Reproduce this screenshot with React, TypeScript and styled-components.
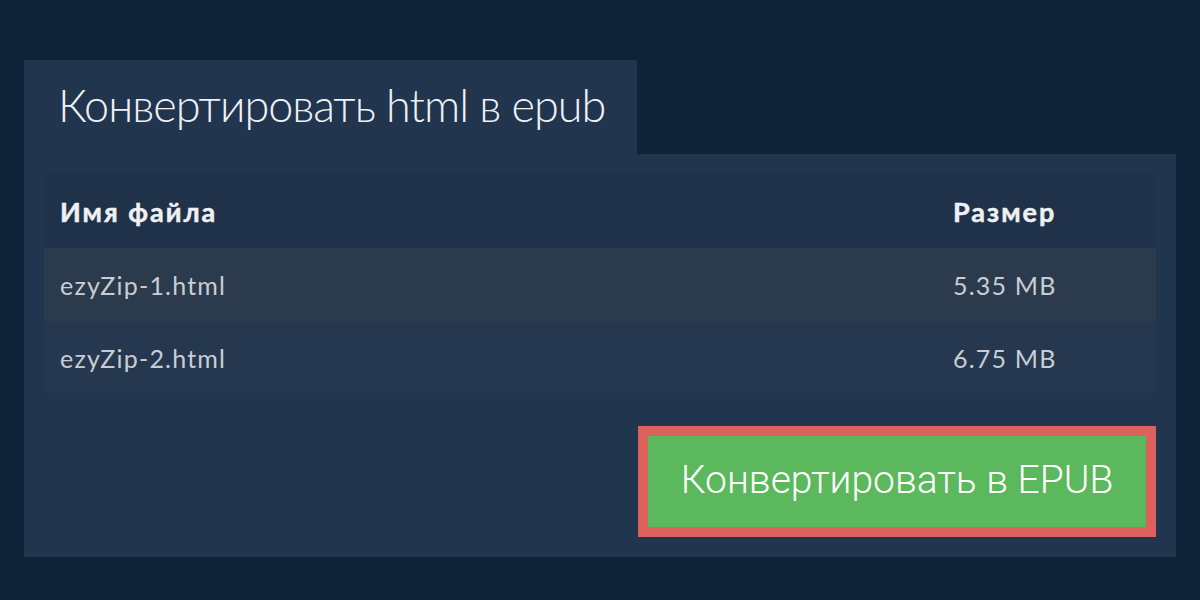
import React from "react";
import styled, { createGlobalStyle } from "styled-components";

const GlobalStyle = createGlobalStyle`
  html, body { margin: 0; padding: 0; }
  body {
    background: #0f2238;
    font-family: Lato, "Noto Sans", sans-serif;
    width: 1200px;
    height: 600px;
    overflow: hidden;
  }
`;

const Page = styled.div`
  padding: 60px 24px 0 24px;
  display: flex;
  flex-direction: column;
  align-items: flex-start;
`;

const Tab = styled.div`
  background: #21354e;
  width: 613px;
  height: 94px;
  box-sizing: border-box;
  padding: 0 0 0 34px;
  display: flex;
  align-items: center;
`;

const Title = styled.h1`
  margin: 0 0 4px 0;
  font-family: Lato, sans-serif;
  font-weight: 300;
  font-size: 45px;
  color: #eef1f4;
  letter-spacing: -1px;
  white-space: nowrap;
`;

const Panel = styled.div`
  background: #21354e;
  align-self: stretch;
  box-sizing: border-box;
  padding: 20px 20px 20px 20px;
  display: flex;
  flex-direction: column;
  gap: 33px;
`;

const Table = styled.div`
  display: grid;
  grid-template-columns: 1fr 219px;
`;

const Row = styled.div<{ $bg: string; $h: number }>`
  display: contents;
  & > div {
    background: ${(p) => p.$bg};
    height: ${(p) => p.$h}px;
  }
`;

const Cell = styled.div<{ $head?: boolean }>`
  display: flex;
  align-items: center;
  padding: 0 16px;
  font-family: Lato, sans-serif;
  font-size: ${(p) => (p.$head ? "27px" : "25px")};
  font-weight: ${(p) => (p.$head ? 700 : 400)};
  letter-spacing: ${(p) => (p.$head ? "2px" : "1.2px")};
  -webkit-text-stroke: ${(p) => (p.$head ? "0.5px #eef0f3" : "0")};
  color: ${(p) => (p.$head ? "#eef0f3" : "#c9cdd3")};
  white-space: nowrap;
`;

const Actions = styled.div`
  display: flex;
  justify-content: flex-end;
`;

const Button = styled.button`
  width: 518px;
  height: 111px;
  background: #5cb85c;
  border: 10px solid #dc605c;
  box-sizing: border-box;
  margin: 0;
  padding: 0 0 4px 0;
  font-family: Roboto, sans-serif;
  font-weight: 300;
  font-size: 39px;
  color: #ffffff;
  cursor: pointer;
`;

const files = [
  { name: "ezyZip-1.html", size: "5.35 MB", bg: "#2b3a4c", h: 74 },
  { name: "ezyZip-2.html", size: "6.75 MB", bg: "#253850", h: 71 },
];

export default function App() {
  return (
    <>
      <GlobalStyle />
      <Page>
        <Tab>
          <Title>Конвертировать html в epub</Title>
        </Tab>
        <Panel>
          <Table>
            <Row $bg="#1f3249" $h={74}>
              <Cell $head>Имя файла</Cell>
              <Cell $head>Размер</Cell>
            </Row>
            {files.map((f) => (
              <Row key={f.name} $bg={f.bg} $h={f.h}>
                <Cell>{f.name}</Cell>
                <Cell>{f.size}</Cell>
              </Row>
            ))}
          </Table>
          <Actions>
            <Button>Конвертировать в EPUB</Button>
          </Actions>
        </Panel>
      </Page>
    </>
  );
}
